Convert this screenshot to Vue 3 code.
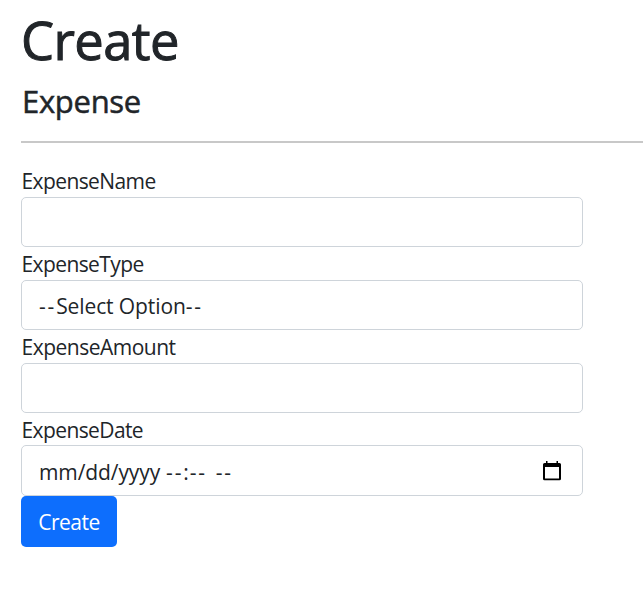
<script setup>
const fields = [
  { id: 'name', label: 'ExpenseName', text: '' },
  { id: 'type', label: 'ExpenseType', text: 'Select Option' },
  { id: 'amount', label: 'ExpenseAmount', text: '' },
]
</script>

<template>
  <main class="page">
    <h1>Create</h1>
    <h4>Expense</h4>
    <hr />
    <form @submit.prevent>
      <div v-for="f in fields" :key="f.id" class="group">
        <label :class="f.id">{{ f.label }}</label>
        <div class="control"><span v-if="f.text"><span class="hy">--</span>{{ f.text }}<span class="hy">--</span></span></div>
      </div>
      <div class="group">
        <label class="date">ExpenseDate</label>
        <div class="control date-control">
          <div class="parts">
            <span>mm/dd/yyyy</span><span class="time"><span class="hy">--</span>:<span class="hy minutes">--</span></span><span class="hy dash">--</span>
          </div>
          <svg width="20" height="22" viewBox="0 0 20 22">
            <path fill="#000" fill-rule="evenodd" d="M4 1h1.500v2h9V1H16v2h1.500Q19 3 19 4.500V18.700Q19 20.300 17.500 20.300H2.500Q1 20.300 1 18.700V4.500Q1 3 2.500 3H4zM3 7v11.500h14V7z" />
          </svg>
        </div>
      </div>
      <button type="submit">Create</button>
    </form>
  </main>
</template>

<style>
body {
  margin: 0;
  background: #fff;
  overflow: hidden;
}
</style>

<style scoped>
.page {
  box-sizing: border-box;
  height: 612px;
  padding: 8px 0 0 21px;
  color: #212529;
  font-family: "Open Sans", "Noto Sans", sans-serif;
  font-size: 21px;
  overflow: hidden;
}
h1, h4 {
  margin: 0;
  font-weight: 500;
  white-space: nowrap;
}
h1 {
  height: 74px;
  font-size: 52.5px;
  line-height: 64px;
  letter-spacing: -0.6px;
  -webkit-text-stroke: 1px #212529;
}
h4 {
  height: 59px;
  padding-left: 1px;
  font-size: 31px;
  line-height: 38px;
  letter-spacing: -0.3px;
  -webkit-text-stroke: 0.5px #212529;
}
hr {
  height: 2px;
  margin: 0 0 21px;
  border: 0;
  background: #c8c8c8;
}
.group {
  width: 562px;
}
label {
  display: block;
  height: 33px;
  padding-left: 0.5px;
  line-height: 35px;
  letter-spacing: -0.6px;
}
label.amount {
  letter-spacing: -0.5px;
}
label.date {
  height: 32px;
}
.control {
  box-sizing: border-box;
  display: flex;
  align-items: center;
  height: 50px;
  padding: 2px 17px 0;
  border: 1px solid #ced4da;
  border-radius: 5px;
  letter-spacing: -0.1px;
  white-space: nowrap;
}
.hy {
  letter-spacing: 1.8px;
}
.date-control {
  justify-content: space-between;
  height: 51px;
  padding-right: 20px;
}
.parts {
  display: flex;
}
.time {
  margin-left: 6px;
}
.minutes {
  margin-left: 1px;
}
.dash {
  margin-left: 9px;
}
.date-control svg {
  margin-bottom: 2px;
}
button {
  display: block;
  box-sizing: border-box;
  width: 96px;
  height: 51px;
  padding: 1px 0 0;
  border: 0;
  border-radius: 5px;
  background: #0d6efd;
  color: #fff;
  font: inherit;
  letter-spacing: -0.5px;
}
</style>
